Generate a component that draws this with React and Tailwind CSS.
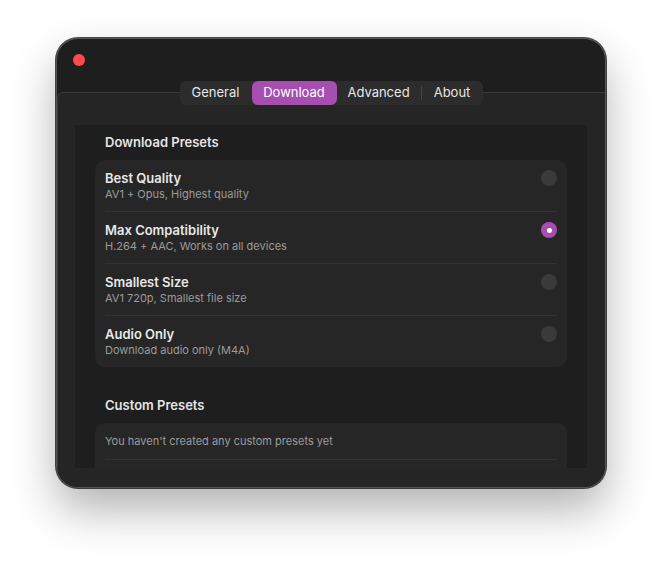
import React from 'react'

const PRESETS = [
  { title: 'Best Quality', desc: 'AV1 + Opus, Highest quality' },
  { title: 'Max Compatibility', desc: 'H.264 + AAC, Works on all devices', selected: true },
  { title: 'Smallest Size', desc: 'AV1 720p, Smallest file size' },
  { title: 'Audio Only', desc: 'Download audio only (M4A)' },
];

const TABS = [
  { label: 'General', w: 'w-[72px]' },
  { label: 'Download', w: 'w-[85px]', active: true },
  { label: 'Advanced', w: 'w-[84px]' },
  { label: 'About', w: 'w-[61px]' },
];

const Radio = ({ selected }) => (
  selected ? (
    <div className='w-4 h-4 rounded-full bg-[#a64fb1] flex items-center justify-center'>
      <div className='w-[5px] h-[5px] rounded-full bg-white' />
    </div>
  ) : (
    <div className='w-4 h-4 rounded-full bg-[#3a3a3a]' />
  )
);

const App = () => {
  return (
    <div className="w-[662px] h-[562px] bg-white flex justify-center pt-[38px] font-['Inter',sans-serif]">
      <div className='w-[550px] h-[450px] rounded-[22px] bg-[#1e1e1e] border border-[#555] shadow-[0_0_0_1px_rgba(0,0,0,0.7),0_22px_45px_rgba(0,0,0,0.3)] overflow-hidden flex flex-col'>
        {/* title bar */}
        <div className='h-[53px] shrink-0 pl-[16px] pt-[15px]'>
          <div className='w-3 h-3 rounded-full bg-[#fe4a4b]' />
        </div>

        {/* body */}
        <div className='relative flex-1 min-h-0 bg-[#252525] border-t border-l border-[#3a3a3a] rounded-tl-[6px] pl-[17px] pr-[18px] pt-[32px] pb-[19px] flex flex-col'>
          <div className='absolute left-0 right-0 -top-[12px] flex justify-center'>
            <div className='flex items-center h-6 -ml-px rounded-[6px] bg-[#2c2c2c] text-[13px] text-[#e6e6e6]'>
              {TABS.map((t) => (
                <React.Fragment key={t.label}>
                  {t.label === 'About' && <div className='w-px h-[14px] bg-[#454545]' />}
                  <div className={`${t.w} h-6 flex items-center justify-center rounded-[6px] ${t.active ? 'bg-[#a64fb1] text-white' : ''}`}>
                    {t.label}
                  </div>
                </React.Fragment>
              ))}
            </div>
          </div>

          <div className='flex-1 min-h-0 overflow-hidden bg-[#1e1e1e] px-5 pt-[9px]'>
            <p className='text-[13px] leading-4 font-semibold text-[#e4e4e4] px-[10px] mb-[10px]'>Download Presets</p>
            <div className='rounded-[10px] bg-[#262626]'>
              {PRESETS.map((p, i) => (
                <div key={p.title}>
                  {i > 0 && <div className='mx-[10px] h-px bg-[#323232]' />}
                  <div className='h-[51px] px-[10px] pt-[10px] flex justify-between items-start'>
                    <div>
                      <p className='text-[13px] leading-4 font-semibold text-[#e8e8e8]'>{p.title}</p>
                      <p className='text-[11px] leading-[14px] mt-px text-[#9b9b9b]'>{p.desc}</p>
                    </div>
                    <Radio selected={p.selected} />
                  </div>
                </div>
              ))}
            </div>

            <p className='text-[13px] leading-4 font-semibold text-[#e4e4e4] px-[10px] mt-[30px] mb-[10px]'>Custom Presets</p>
            <div className='rounded-[10px] bg-[#262626]'>
              <div className='h-[36px] px-[10px] flex items-center'>
                <p className='text-[11px] text-[#9b9b9b]'>You haven't created any custom presets yet</p>
              </div>
              <div className='mx-[10px] h-px bg-[#323232]' />
              <div className='h-[40px]' />
            </div>
          </div>
        </div>
      </div>
    </div>
  )
}

export default App;
